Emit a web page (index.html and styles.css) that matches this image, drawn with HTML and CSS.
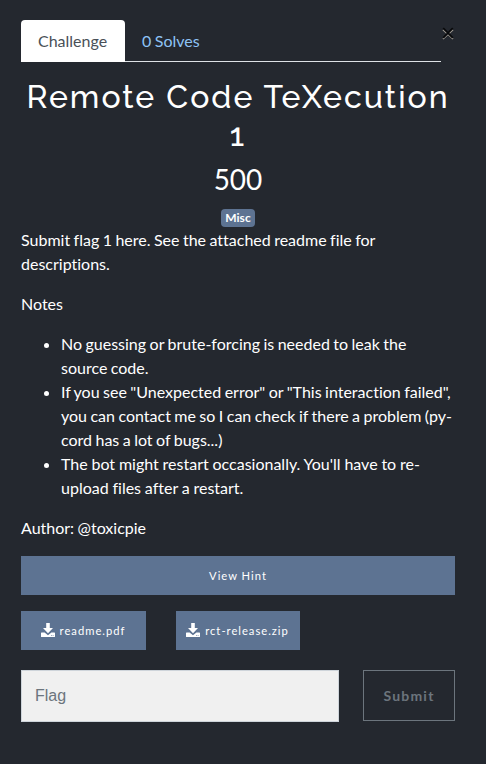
FILE: index.html
```html
<!DOCTYPE html>
<html lang="en">
<head>
<meta charset="utf-8">
<title>Remote Code TeXecution 1</title>
<link rel="stylesheet" href="styles.css">
</head>
<body>
<main class="modal">
  <header class="top">
    <nav class="tabs">
      <a class="tab active">Challenge</a>
      <a class="tab">0 Solves</a>
    </nav>
    <button class="close" aria-label="Close">
      <svg width="12" height="13" viewBox="0 0 12 13" fill="none" stroke-width="1.8"><path d="M1 2.700l10 9.300M11 2.700L1 12" stroke="#a09b93" stroke-width="1.500"/><path d="M1.200 1.200l9.600 9.600M10.800 1.200L1.200 10.800" stroke="#08090b"/></svg>
    </button>
  </header>
  <h2 class="title">Remote Code TeXecution 1</h2>
  <h3 class="points">500</h3>
  <div class="tags"><span class="badge">Misc</span></div>
  <section class="desc">
    <p>Submit flag 1 here. See the attached readme file for descriptions.</p>
    <p>Notes</p>
    <ul>
      <li>No guessing or brute-forcing is needed to leak the source code.</li>
      <li>If you see "Unexpected error" or "This interaction failed", you can contact me so I can check if there a problem (py-cord has a lot of bugs...)</li>
      <li class="loose">The bot might restart occasionally. You'll have to re-upload files after a restart.</li>
    </ul>
    <p>Author: @toxicpie</p>
  </section>
  <button class="btn hint">View Hint</button>
  <div class="files">
    <a class="btn"><svg class="icon" viewBox="0 0 14 14" fill="#fff"><path d="M5.200 0h3.600v5h3.200L7 10.200 2 5h3.200z"/><path d="M.6 9.500h3L7 12.300l3.400-2.800h3q.6 0 .6.600v3.300q0 .6-.6.600H.6q-.6 0-.6-.600v-3.300q0-.6.600-.600zM10 12.100v.7h.8v-.7zm1.700 0v.7h.8v-.7z" fill-rule="evenodd"/></svg><span>readme.pdf</span></a>
    <a class="btn"><svg class="icon" viewBox="0 0 14 14" fill="#fff"><path d="M5.200 0h3.600v5h3.200L7 10.200 2 5h3.200z"/><path d="M.6 9.500h3L7 12.300l3.400-2.800h3q.6 0 .6.600v3.300q0 .6-.6.600H.6q-.6 0-.6-.600v-3.300q0-.6.600-.600zM10 12.100v.7h.8v-.7zm1.700 0v.7h.8v-.7z" fill-rule="evenodd"/></svg><span>rct-release.zip</span></a>
  </div>
  <form class="answer">
    <input class="flag" type="text" placeholder="Flag">
    <button class="submit" type="button">Submit</button>
  </form>
</main>
</body>
</html>
```
FILE: styles.css
```css
* { box-sizing: border-box; }
body {
  margin: 0;
  min-height: 100vh;
  background: #24282f;
  color: #fff;
  font: 16px/24px Lato, sans-serif;
}
.modal { padding: 20px 31px 0 21px; }
.top { display: flex; width: 434px; }
.tabs {
  display: flex;
  width: 420px;
  height: 42px;
  border-bottom: 1px solid #dee2e6;
}
.tab {
  height: 42px;
  padding: 9px 17px;
  color: #8ec3f5;
  word-spacing: -0.6px;
}
.tab.active {
  width: 104px;
  background: #fff;
  color: #495057;
  border-radius: 4px 4px 0 0;
}
.close {
  flex: none;
  align-self: flex-start;
  width: 14px;
  height: 26px;
  padding: 7px 0 0 1px;
  border: 0;
  background: none;
}
.close svg { display: block; margin-top: -6px; }
.title {
  width: 434px;
  margin: 16px 0 0;
  text-align: center;
  font: 500 32px/38.4px Raleway, Lato, sans-serif;
  letter-spacing: 2px;
}
.points {
  width: 434px;
  margin: 7px 0 0;
  text-align: center;
  font-weight: 400;
  font-size: 28px;
  line-height: 34px;
}
.tags { width: 434px; height: 32px; padding-top: 13px; text-align: center; line-height: 0; }
.badge {
  display: inline-block;
  height: 18px;
  padding: 3px 4.800px;
  border-radius: 4px;
  background: #5d7392;
  font-size: 12px;
  font-weight: 700;
  line-height: 12px;
}
.desc { width: 434px; word-spacing: -0.65px; font-variant-ligatures: none; }
.desc p { margin: 0 0 16px; }
.desc ul { margin: 0 0 16px; padding-left: 40px; }
.desc .loose { word-spacing: -0.3px; }
.btn {
  display: flex;
  align-items: center;
  justify-content: center;
  height: 39px;
  padding: 1px 0 0;
  border: 0;
  background: #5d7392;
  color: #fff;
  font: 400 11.200px/20px Lato, sans-serif;
  letter-spacing: 1px;
}
.hint { width: 434px; padding-top: 2px; }
.files { display: grid; grid-template-columns: 125px 124px; gap: 30px; margin-top: 16px; }
.icon { width: 14px; height: 14px; margin: 0 5px 2px 0; }
.files .btn { padding: 2px 1px 0 0; }
.answer { display: flex; gap: 24px; margin-top: 20px; align-items: flex-start; }
.flag {
  width: 318px;
  height: 52px;
  padding: 0 13px;
  border: 1px solid #ced4da;
  border-radius: 0;
  background: #f0f0f0;
  font: 16px "Liberation Sans", sans-serif;
}
.flag::placeholder { color: #6c757d; }
.submit {
  width: 92px;
  height: 51px;
  padding: 0;
  border: 1px solid #6c757d;
  background: none;
  color: #6c757d;
  font: 700 14px Lato, sans-serif;
  letter-spacing: 1.200px;
}
```
